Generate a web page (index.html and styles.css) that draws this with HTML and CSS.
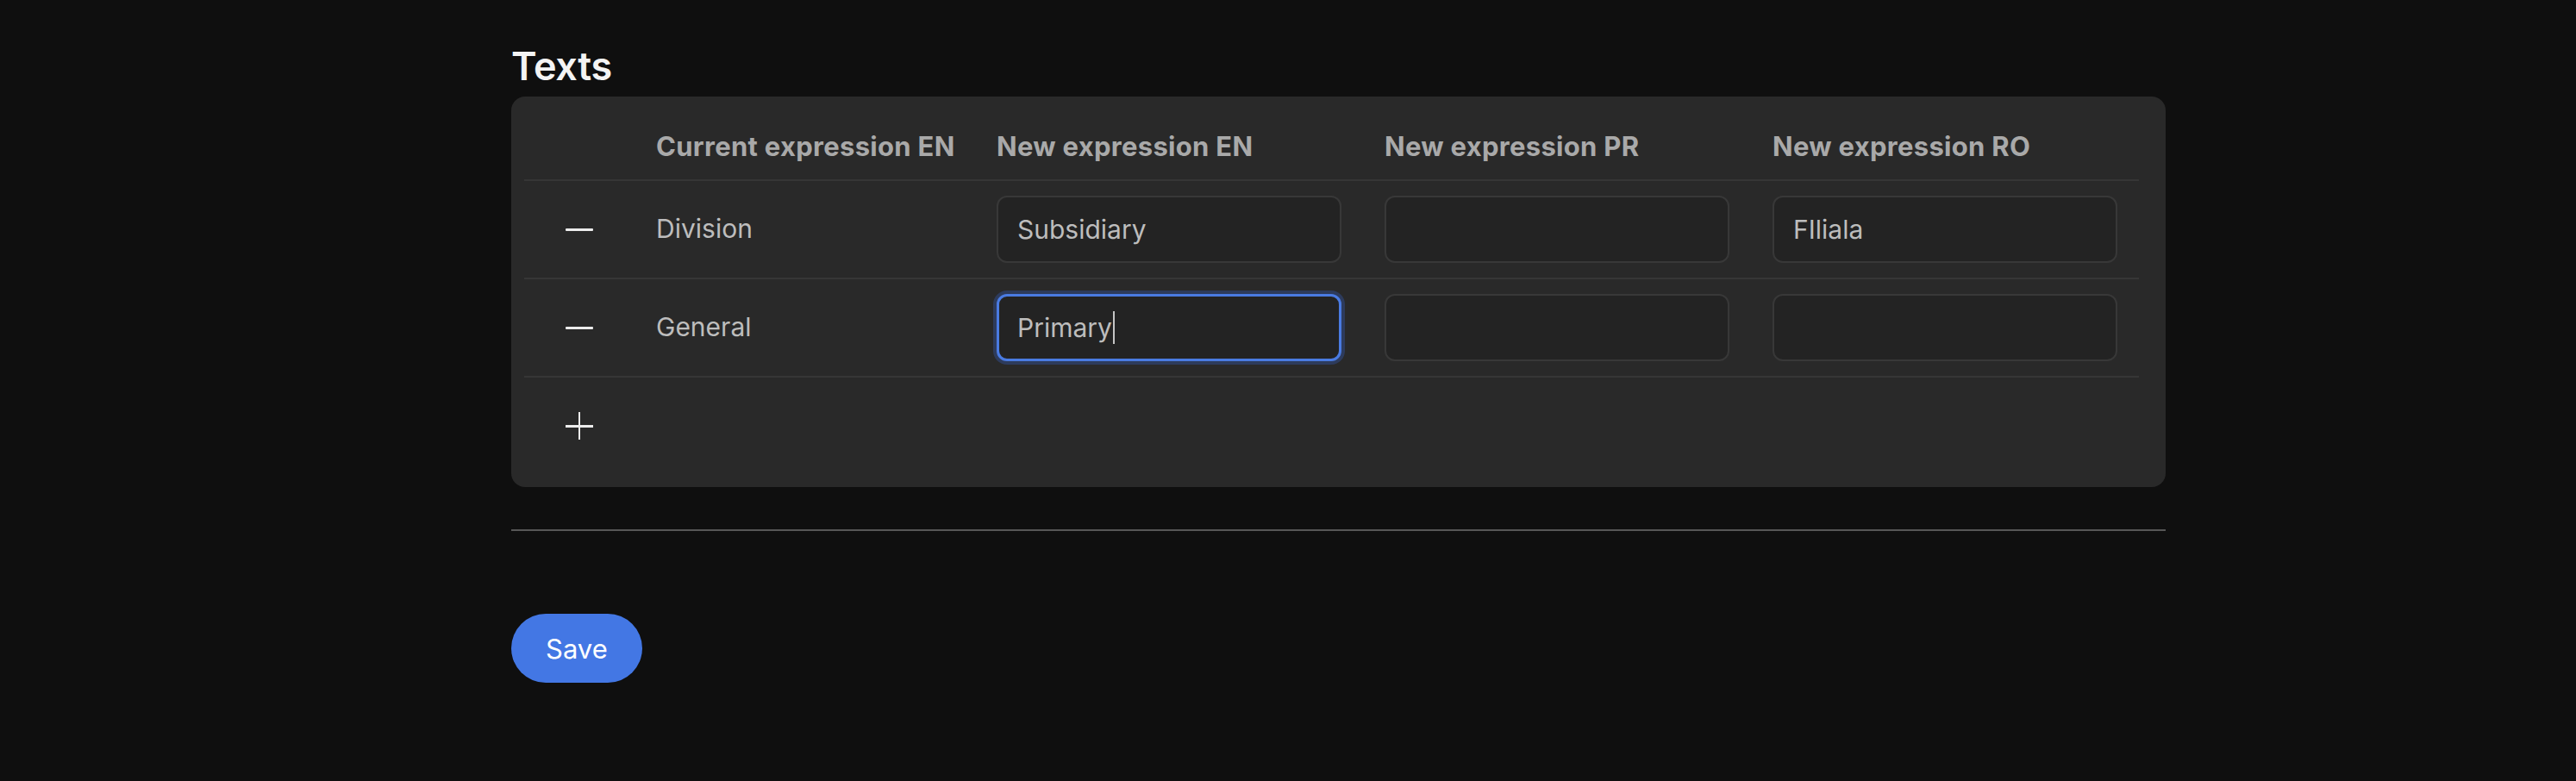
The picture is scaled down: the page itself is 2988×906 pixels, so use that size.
FILE: index.html
```html
<!DOCTYPE html>
<html lang="en">
<head>
<meta charset="utf-8">
<title>Texts</title>
<link rel="stylesheet" href="styles.css">
</head>
<body>
<main class="page">
  <h2 class="title">Texts</h2>
  <section class="card">
    <div class="grid">
      <div class="cell head"></div>
      <div class="cell head">Current expression EN</div>
      <div class="cell head">New expression EN</div>
      <div class="cell head">New expression PR</div>
      <div class="cell head">New expression RO</div>

      <div class="cell"><button class="icon-btn" aria-label="Remove"><span class="minus"></span></button></div>
      <div class="cell text">Division</div>
      <div class="cell"><input class="field" type="text" value="Subsidiary"></div>
      <div class="cell"><input class="field" type="text" value=""></div>
      <div class="cell last"><input class="field" type="text" value="FIliala"></div>

      <div class="cell"><button class="icon-btn" aria-label="Remove"><span class="minus"></span></button></div>
      <div class="cell text">General</div>
      <div class="cell"><div class="field focused"><span>Primary</span><span class="caret"></span></div></div>
      <div class="cell"><input class="field" type="text" value=""></div>
      <div class="cell last"><input class="field" type="text" value=""></div>

      <div class="cell add"><button class="icon-btn" aria-label="Add"><span class="plus"></span></button></div>
    </div>
  </section>
  <hr class="rule">
  <button class="save">Save</button>
</main>
</body>
</html>
```
FILE: styles.css
```css
html, body {
  margin: 0;
  padding: 0;
  background: #0f0f0f;
}
body {
  font-family: Inter, "Noto Sans", sans-serif;
  color: #bdbdbd;
  width: 2988px;
  height: 906px;
  overflow: hidden;
}
.page {
  margin-left: 593px;
  width: 1919px;
  display: flex;
  flex-direction: column;
  align-items: flex-start;
}
.title {
  margin: 49px 0 7px 0;
  font-size: 45px;
  line-height: 56px;
  font-weight: 600;
  color: #f4f4f4;
  letter-spacing: -0.3px;
}
.card {
  align-self: stretch;
  background: #292929;
  border-radius: 16px;
  padding: 0 31px 15px 15px;
}
.grid {
  display: grid;
  grid-template-columns: 153px 395px 450px 450px 425px;
}
.cell {
  display: flex;
  align-items: center;
  height: 112px;
  border-bottom: 2px solid #363636;
  box-sizing: content-box;
}
.cell.head {
  height: 36px;
  padding: 40px 0 20px 0;
  align-items: flex-end;
  font-size: 31px;
  line-height: 36px;
  font-weight: 700;
  letter-spacing: 0.3px;
  color: #a9a9a9;
  white-space: nowrap;
}
.cell.text {
  font-size: 30px;
  line-height: 36px;
  color: #bdbdbd;
  padding-bottom: 2px;
  height: 110px;
}
.cell.add {
  grid-column: 1 / -1;
  border-bottom: none;
}
.icon-btn {
  margin-left: 48px;
  width: 32px;
  height: 32px;
  padding: 0;
  border: none;
  background: transparent;
  position: relative;
  display: flex;
  align-items: center;
  justify-content: center;
}
.minus {
  display: block;
  width: 32px;
  height: 3px;
  background: #ececec;
  border-radius: 1px;
}
.plus {
  display: block;
  width: 32px;
  height: 32px;
  position: relative;
}
.plus::before,
.plus::after {
  content: "";
  position: absolute;
  background: #ececec;
}
.plus::before {
  left: 0;
  top: 15px;
  width: 32px;
  height: 2.5px;
}
.plus::after {
  left: 15px;
  top: 0;
  width: 2px;
  height: 32px;
}
.field {
  box-sizing: border-box;
  width: 400px;
  height: 78px;
  padding: 0 22px;
  border: 2px solid #383838;
  border-radius: 12px;
  background: #232323;
  color: #bdbdbd;
  font-family: Inter, "Noto Sans", sans-serif;
  font-size: 30px;
  outline: none;
  display: flex;
  align-items: center;
}
.field.focused {
  border: 3px solid #4a7be2;
  padding-left: 21px;
  box-shadow: 0 0 0 4px #2d3b5c;
}
.caret {
  display: inline-block;
  width: 2px;
  height: 38px;
  background: #c4c4c4;
  margin-left: 1px;
}
.rule {
  align-self: stretch;
  margin: 49px 0 0 0;
  border: none;
  height: 2px;
  background: #575757;
}
.save {
  margin-top: 96px;
  height: 80px;
  padding: 0 40px;
  border: none;
  border-radius: 40px;
  background: #4377e4;
  color: #ffffff;
  font-family: Inter, "Noto Sans", sans-serif;
  font-size: 31px;
  font-weight: 400;
}
```
